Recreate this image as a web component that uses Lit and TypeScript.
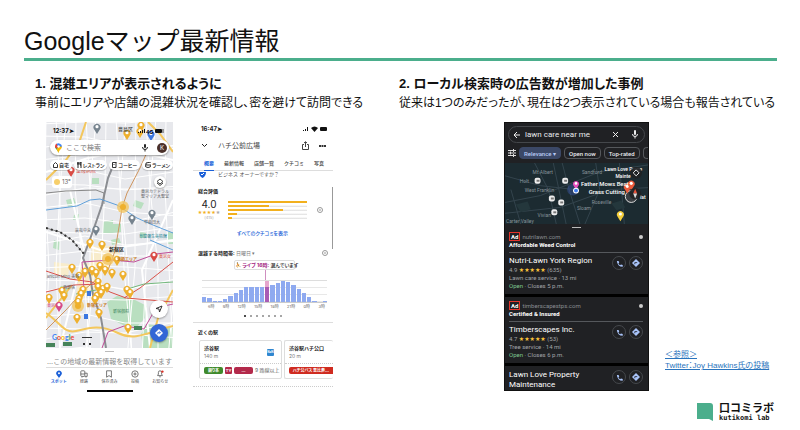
import { LitElement, html, svg, css } from "lit";
import { customElement } from "lit/decorators.js";

const base = css`
  * { box-sizing: border-box; margin: 0; padding: 0; }
  button, input, select {
    font: inherit; color: inherit; background: none; border: 0; outline: 0;
    min-width: 0; cursor: pointer; white-space: nowrap; line-height: inherit;
  }
  svg { display: block; flex: none; }
  :host { display: block; font-family: "Liberation Sans", "Noto Sans CJK JP", sans-serif; }
`;

type Pt = [number, number];

const pin = (x: number, y: number, fill: string, r = 3) => svg`
  <path d="M${x} ${y + r * 2} l${-r * 0.8} ${-r * 1.3} a${r} ${r} 0 1 1 ${r * 1.6} 0 z" fill=${fill}/>
  <circle cx=${x} cy=${y - r * 0.1} r=${r * 0.45} fill="#fff"/>`;

const gold = "#eeb02e";
const goldPins: Pt[] = [
  [90, 242], [102, 244], [127, 133], [141, 125], [140, 131], [72, 267], [79, 275], [85, 271], [92, 269],
  [100, 265], [105, 269], [112, 272], [123, 274], [98, 281], [98, 286], [103, 288], [107, 286], [62, 290],
  [64, 295], [49, 297], [83, 289], [81, 293], [79, 298], [78, 301], [97, 295], [95, 298], [127, 289],
  [130, 292], [99, 312], [77, 317], [128, 327], [96, 272], [101, 292], [117, 259],
];
const greyPins: Pt[] = [[97, 127], [132, 218], [152, 213], [96, 229]];
const parks = [
  "M107 302 l10 -6 14 2 16 8 -2 12 -8 9 -14 -2 -12 -6z",
  "M141 334 l6 -10 26 4 0 20 -30 0z",
  "M103 222 l10 -2 0 4 8 0 0 8 -18 2z",
  "M92 178 h7 v6 h-7z M66 200 l8 -2 2 6 -8 3z M54 240 l6 2 -1 8 -6 -2z M135 200 l9 3 -3 6 -8 -3z M168 232 h5 v12 h-5z M60 286 h8 v8 h-8z",
  "M111 240 l8 -2 2 5 -9 2z M140 232 l6 1 0 5 -6 0z M74 215 l5 -1 0 5 -6 1z",
];

const lines = (ds: string[], stroke: string, w: number, dash = "") =>
  ds.map((d) => svg`<path d=${d} fill="none" stroke=${stroke} stroke-width=${w} stroke-dasharray=${dash || "none"}/>`);

const streetsA = Array.from({ length: 24 }, (_, i) => `M40 ${100 + i * 12} l45 ${-8 + (i % 4) * 3} 40 ${9 - (i % 3) * 4} 55 ${-12 + (i % 5) * 4}`);
const streetsB = Array.from({ length: 17 }, (_, i) => `M${36 + i * 10} 118 l${-6 + (i % 3) * 5} 70 ${8 - (i % 4) * 4} 80 ${-8 + (i % 5) * 4} 90`);

const bellIcon = svg`<path d="M2 7 h6 l-1 -2 v-2 a2 2 0 0 0 -4 0 v2z M4 8.500 h2" fill="none" stroke="#555" stroke-width="1"/><circle cx="8" cy="2" r="1.500" fill="#d93025"/>`;

@customElement("tokyo-map-phone")
class TokyoMapPhone extends LitElement {
  static styles = [base, css`
    :host { width: 127px; overflow: hidden; background: #fff; font-family: Inter, "Noto Sans CJK JP", sans-serif; }
    .map { display: grid; }
    .map > * { grid-area: 1 / 1; min-width: 0; }
    .canvas { width: 100%; }
    .over { display: flex; flex-direction: column; }
    .status { display: flex; justify-content: space-between; padding: 0 7px; height: 18px; align-items: center; font-size: 6px; font-weight: 700; line-height: 8px; }
    .search { display: flex; align-items: center; gap: 4px; margin: 0 4px; padding: 0 2px 0 5px; height: 15px; border-radius: 8px; background: #fff; box-shadow: 0 1px 2px #0006; }
    .search input { flex: 1; font-size: 7px; line-height: 10px; }
    .search input::placeholder { color: #777; opacity: 1; }
    .avatar { width: 10px; height: 10px; border-radius: 50%; background: #4a3029; color: #fff; font-size: 6px; line-height: 10px; text-align: center; }
    .chips { display: flex; justify-content: space-between; margin: 5px 0 0 4px; padding-bottom: 2px; }
    .chip { display: flex; align-items: center; gap: 1px; flex: none; height: 10px; padding: 0 3px; border-radius: 5px; background: #fff; box-shadow: 0 1px 1px #0003; font-size: 5px; line-height: 8px; font-weight: 500; font-feature-settings: "palt"; }
    .row { display: flex; justify-content: space-between; padding: 4px 7px 0 6px; }
    .weather { display: flex; align-items: center; gap: 2px; width: 20px; height: 12px; padding-left: 2px; border-radius: 3px; background: #fff; font-size: 6px; line-height: 8px; color: #666; }
    .round { display: grid; place-items: center; border-radius: 50%; background: #fff; box-shadow: 0 1px 2px #0005; }
    .layers { width: 12px; height: 12px; }
    .fabs { display: flex; flex-direction: column; align-items: flex-end; gap: 6px; margin-top: auto; padding: 0 5px 6px; }
    .fab { width: 18px; height: 18px; }
    .go { background: #3367d6; }
    .sheet { display: flex; flex-direction: column; align-items: center; }
    .grip { width: 9px; height: 1px; margin: 3px 0 5px; background: #bbb; }
    .note { font-size: 7px; line-height: 10px; color: #888; white-space: nowrap; }
    nav { display: grid; grid-template-columns: repeat(5, 1fr); width: 100%; border-top: 1px solid #ddd; padding-top: 2px; }
    .tab { display: flex; flex-direction: column; align-items: center; font-size: 4px; line-height: 6px; color: #555; gap: 1px; }
    .tab.on { color: #1a5fd8; font-weight: 700; }
    .home { width: 46px; height: 2px; margin-top: 5px; background: #000; }
  `];

  render() {
    const tab = (label: string, icon: unknown, on = false) => html`
      <button class="tab ${on ? "on" : ""}"><svg width="8" height="8" viewBox="0 0 10 10">${icon}</svg>${label}</button>`;
    return html`
      <div class="map">
        <svg class="canvas" viewBox="46 122 127 226" role="img" aria-label="新宿区の地図">
          <rect x="46" y="122" width="127" height="226" fill="#e7e8ec"/>
          ${parks.map((d) => svg`<path d=${d} fill="#b9dfc0"/>`)}
          <path d="M92 246 l20 0 8 8 -10 14 -20 -2z M80 262 l14 2 0 30 -18 4z M54 262 l16 2 -2 12 -14 -2z" fill="#f8eccb"/>
          ${lines([...streetsA, ...streetsB], "#fff", 1)}
          ${lines(["M46 172 L88 158 128 150 173 160", "M46 232 L100 250 173 240", "M60 348 L84 250 70 190", "M150 348 L142 270 173 200"], "#fff", 2)}
          ${lines(["M86 122 L80 140 66 160 50 176 46 180", "M46 318 L60 300 72 285", "M46 313 C60 322 64 334 76 331 S100 324 118 333 150 331 173 326", "M173 152 L160 134 148 122", "M150 348 L158 318 173 290"], "#f4c75c", 2)}
          ${lines(["M151 143 L140 168 127 193 122 208 120 221 115 251 108 270", "M46 330 L66 310 84 290 96 280"], "#cf955e", 1)}
          ${lines(["M115 161 L108 178 102 205 93 231 83 258 90 275 93 295 101 318 106 348"], "#8b8d92", 2)}
          ${lines(["M46 193 L66 191 96 190 104 193 104 204", "M46 228 L60 232 72 240 84 254"], "#888", 1)}
          ${lines(["M46 228 L60 232 72 240 84 254"], "#333", 2, "2 3")}
          ${lines(["M46 210 L77 206 90 200 100 199 117 205 137 218 153 225 173 233", "M173 250 L150 240"], "#5f9fd9", 1)}
          ${lines(["M46 271 L70 279 92 282 110 292 126 298 173 302", "M46 292 L74 285 100 284", "M124 298 L140 288 173 262"], "#d9524a", 1)}
          ${lines(["M102 348 L108 332 124 326 144 329 156 308 173 304", "M82 262 L112 260 134 262 156 254 173 252", "M82 262 L84 288"], "#bf4d97", 1)}
          ${lines(["M124 290 L144 284 173 282", "M76 294 L96 290"], "#72b77c", 1)}
          <circle cx="123" cy="207" r="6" fill="#f3c662" opacity=".8"/><circle cx="123" cy="207" r="3" fill="#eeb02e"/>
          <circle cx="108" cy="259" r="6" fill="#f3c662" opacity=".8"/><circle cx="108" cy="259" r="3" fill="#eeb02e"/>
          <circle cx="78" cy="306" r="6" fill="#f3c662" opacity=".8"/><circle cx="78" cy="306" r="3" fill="#eeb02e"/>
          ${greyPins.map(([x, y]) => pin(x, y, "#76838e", 3.5))}
          ${goldPins.map(([x, y]) => pin(x, y, gold, 3.5))}
          ${pin(151, 134, "#3b76e0", 3.5)}${pin(71, 170, "#d94b44", 3.5)}${pin(154, 255, "#d94b44", 3.5)}${pin(59, 305, "#d64a86", 3.5)}
          <rect x="87" y="291" width="4" height="5" fill="#3b76e0"/><rect x="84" y="314" width="4" height="5" fill="#3b76e0"/>
          <g font-size="5" font-family="Inter, 'Noto Sans CJK JP', sans-serif" fill="#5f6368">
            <text x="118" y="131" fill="#333">豊島区</text>
            <text x="109" y="251" fill="#222" font-weight="700">新宿区</text>
            <text x="76" y="172" fill="#d94b44">聖母病院</text>
            <text x="141" y="193" font-size="4">東京カテドラル</text><text x="141" y="198" font-size="4">聖マリア大聖堂</text>
            <text x="75" y="232" font-size="4">裏板中央</text><text x="144" y="224" font-size="4">早稲田大</text>
            <text x="139" y="238" font-size="4" fill="#2b8796">草間彌生美術館</text>
            <text x="117" y="261" font-size="4" fill="#c67718" font-weight="700">京橋エリア</text>
            <text x="87" y="307" font-size="4" fill="#c67718" font-weight="700">新宿エリア</text>
            <text x="47" y="278" font-size="4">anicon Miho 美容</text><text x="63" y="289" font-size="4">西新宿</text>
            <text x="113" y="313" font-size="4" fill="#41855d">新宿御苑</text>
            <text x="159" y="258" font-size="4" fill="#d94b44">東京女</text><text x="47" y="307" font-size="4" fill="#d64a86">東京</text>
          </g>
          <g fill="#47845a"><rect x="46" y="343" width="9" height="4"/><rect x="63" y="342" width="9" height="4"/><rect x="134" y="326" width="8" height="4"/></g>
          <g fill="#333"><rect x="83" y="343" width="2" height="2"/><rect x="89" y="343" width="2" height="2"/><path d="M82 337 h10 v1 h-10z"/></g>
          <text x="52" y="340" font-size="7" font-family="Lato, sans-serif" font-weight="700"><tspan fill="#4285f4">G</tspan><tspan fill="#ea4335">o</tspan><tspan fill="#fbbc05">o</tspan><tspan fill="#4285f4">g</tspan><tspan fill="#34a853">l</tspan><tspan fill="#ea4335">e</tspan></text>
        </svg>
        <div class="over">
          <div class="status"><span>12:37➤</span>
            <svg width="28" height="6" viewBox="0 0 28 6"><path d="M0 5h1V4H0z M2 5h1V3H2z M4 5h1V2H4z M6 5h1V1H6z" fill="#111"/><text x="8" y="6" font-size="5" font-weight="700">4G</text><rect x="17" y="1" width="7" height="4" rx="1" fill="#111"/><rect x="24" y="1" width="2" height="4" fill="#999"/></svg>
          </div>
          <div class="search">
            <svg width="7" height="10" viewBox="0 0 14 20"><path d="M7 20 C6 14 0 12 0 7 L7 7z" fill="#34a853"/><path d="M7 20 C8 14 14 12 14 7 L10 4 L3 12z" fill="#fbbc05"/><path d="M0 7 A7 7 0 0 1 3 1 L8 6 4 11 C1 10 0 9 0 7z" fill="#ea4335"/><path d="M3 2 A7 7 0 0 1 14 7 L7 8z" fill="#4285f4"/><circle cx="7" cy="7" r="2.500" fill="#fff"/></svg>
            <input aria-label="検索" placeholder="ここで検索">
            <svg width="8" height="9" viewBox="0 0 8 9"><rect x="3" y="1" width="2" height="4" rx="1" fill="#222"/><path d="M1.500 4 a2.500 2.500 0 0 0 5 0 M4 6.500 v2" fill="none" stroke="#222"/></svg>
            <span></span>
            <span class="avatar">K</span>
          </div>
          <div class="chips">
            <button class="chip"><svg width="5" height="6" viewBox="0 0 5 6"><path d="M.5 2.500 L2.500 .5 4.500 2.500 V5.500 H.5z" fill="none" stroke="#333"/></svg>自宅</button>
            <button class="chip"><svg width="5" height="6" viewBox="0 0 5 6"><path d="M1 0 V6 M0 0 V2 H2 V0 M4 6 V0 Q3 1 3 3 H4" fill="none" stroke="#222"/></svg>レストラン</button>
            <button class="chip"><svg width="5" height="6" viewBox="0 0 5 6"><path d="M.5 .5 H4.500 M.5 .5 V5.500 H4 V.5 M2 2 V3" fill="none" stroke="#333"/></svg>コーヒー</button>
            <button class="chip"><svg width="6" height="6" viewBox="0 0 6 6"><path d="M0 3 H6 Q6 5.500 3 5.500 T0 3 M1 3 V1 L6 0" fill="none" stroke="#333"/></svg>ラーメン</button>
          </div>
          <div class="row">
            <div class="weather"><svg width="6" height="6" viewBox="0 0 6 6"><circle cx="3" cy="3" r="3" fill="#f7cf6b"/></svg>13°</div>
            <button class="round layers" aria-label="レイヤ"><svg width="8" height="8" viewBox="0 0 8 8"><path d="M4 1 L7 3.500 4 6 1 3.500z M1 5 L4 7.500 7 5" fill="none" stroke="#444"/></svg></button>
          </div>
          <div class="fabs">
            <button class="round fab" aria-label="現在地"><svg width="8" height="8" viewBox="0 0 8 8"><path d="M7 1 L4.500 7 4 4 1 3.500z" fill="none" stroke="#333"/></svg></button>
            <button class="round fab go" aria-label="経路"><svg width="8" height="8" viewBox="0 0 10 10"><path d="M5 0 L10 5 5 10 0 5z" fill="#fff"/><path d="M3.500 6.500 V4.500 H6.500 M5.500 3 L7 4.500 5.500 6" fill="none" stroke="#3367d6"/></svg></button>
          </div>
        </div>
      </div>
      <div class="sheet">
        <div class="grip"></div>
        <p class="note">…この地域の最新情報を取得しています</p>
        <nav>
          ${tab("スポット", svg`<path d="M5 10 L2 6 a3.500 3.500 0 1 1 6 0z" fill="#1a5fd8"/><circle cx="5" cy="4" r="1.200" fill="#fff"/>`, true)}
          ${tab("経路", svg`<rect x="1" y="1" width="5" height="7" rx="1" fill="none" stroke="#555"/><path d="M6 4 h3 v4 h-3 M1 5h5 M2 9h1 M7 9h1" fill="none" stroke="#555"/>`)}
          ${tab("保存済み", svg`<path d="M2 1 h6 v8 L5 7 2 9z" fill="none" stroke="#555"/>`)}
          ${tab("投稿", svg`<circle cx="5" cy="5" r="4" fill="none" stroke="#555"/><path d="M5 3v4M3 5h4" stroke="#555"/>`)}
          ${tab("お知らせ", bellIcon)}
        </nav>
        <div class="home"></div>
      </div>`;
  }
}

const hours = [5, 4, 1, 1, 3, 6, 9, 12, 15, 15, 15, 15, 21, 17, 19, 21, 20, 17, 13, 9, 5, 1, 0, 1];

@customElement("plaza-info-phone")
class PlazaInfoPhone extends LitElement {
  static styles = [base, css`
    :host { width: 140px; overflow: hidden; background: #fff; color: #222; font-size: 5px; line-height: 8px; font-family: Inter, "Noto Sans CJK JP", sans-serif; }
    .status { display: flex; justify-content: space-between; align-items: center; height: 13px; padding: 0 5px 0 8px; font-size: 6px; font-weight: 700; }
    .title { display: flex; align-items: center; height: 21px; padding: 0 7px 0 8px; gap: 10px; font-size: 7px; line-height: 10px; color: #444; }
    .title span { flex: 1; }
    .title button { display: grid; place-items: center; }
    .tabs { display: flex; justify-content: space-between; height: 15px; padding: 0 9px 0 11px; border-bottom: 1px solid #ddd; color: #444; }
    .tabs button { border-bottom: 1px solid transparent; height: 15px; font-weight: 500; }
    .tabs .on { color: #1a5fd8; border-color: #1a5fd8; font-weight: 700; }
    .owner { display: flex; align-items: center; gap: 12px; height: 7px; line-height: 7px; padding-left: 6px; color: #555; }
    h4 { font-size: 5px; line-height: 8px; padding-left: 5px; }
    .reviews { margin-top: 9px; border-right: 1px solid #999; padding-bottom: 12px; }
    .rating { display: flex; align-items: center; padding: 4px 9px 0 7px; gap: 10px; }
    .score { width: 18px; display: flex; flex-direction: column; align-items: center; white-space: nowrap; }
    .num { font-size: 10px; line-height: 11px; }
    .stars { font-size: 5px; line-height: 5px; color: #f2b01e; font-family: "DejaVu Sans", sans-serif; }
    .stars i, .small { color: #aaa; font-style: normal; }
    .small { font-size: 4px; line-height: 5px; }
    .bars { width: 79px; display: flex; flex-direction: column; gap: 2px; margin-right: auto; }
    .track { height: 2px; background: linear-gradient(#fff, #ddd); }
    .fill { height: 2px; background: #f2b01e; }
    .all { display: block; margin: 9px auto 0; color: #1a5fd8; font-weight: 500; font-feature-settings: "palt"; }
    .busy { display: flex; align-items: center; justify-content: space-between; padding: 0 5px; }
    .busy label { font-weight: 700; }
    .busy select { appearance: none; color: #777; }
    .tip { display: block; width: 61px; margin: 3px auto 0 41px; border: 1px solid #ddd; border-radius: 2px; text-align: center; font-weight: 500; white-space: nowrap; font-feature-settings: "palt"; }
    .tip b { color: #a3217f; }
    .stem { width: 1px; height: 10px; background: #cf8fc0; margin-left: 72px; }
    .chart { display: flex; align-items: flex-end; gap: 1px; height: 23px; margin: 0 6px 0 9px; border-top: 1px solid #ddd; border-bottom: 1px solid #ccc; background: repeating-linear-gradient(#fff 0 6px, #e8e8e8 6px 7px); }
    .hour { flex: 1; background: #8faaf0; }
    .hour.live { background: linear-gradient(#e6a6cd 0 30%, #a95bb4 30%); }
    .axis { display: flex; justify-content: space-between; padding: 0 8px 0 15px; font-size: 4px; line-height: 8px; color: #666; }
    .dots { display: flex; gap: 4px; justify-content: center; padding: 4px 0 5px; }
    .dot { width: 2px; height: 2px; border-radius: 50%; background: #888; }
    .dot:first-child { background: #111; }
    .near { border-top: 1px solid #ddd; padding: 5px 0 7px; overflow: hidden; border-bottom: 1px dotted #ccc; }
    .cards { display: flex; gap: 2px; margin: 4px 0 0 6px; }
    .card { flex: none; width: 83px; height: 39px; border: 1px solid #ddd; border-radius: 2px; }
    .next { flex: 1; border-right: 0; min-width: 0; }
    .place { display: flex; align-items: center; justify-content: space-between; height: 23px; padding: 0 7px 0 4px; border-bottom: 1px dotted #ccc; white-space: nowrap; }
    .next .place { padding-right: 0; }
    .place b { display: block; }
    .place span { color: #777; }
    .place .jr { width: 7px; height: 7px; background: #2f86d0; border-radius: 1px; color: #fff; font-size: 3px; line-height: 7px; text-align: center; font-weight: 700; }
    .routes { display: flex; align-items: center; gap: 2px; padding: 3px 0 3px 4px; color: #666; white-space: nowrap; line-height: 7px; font-feature-settings: "palt"; }
    .r { flex: 0 0 19px; height: 7px; border-radius: 2px; color: #fff; text-align: center; font-weight: 700; font-size: 4px; line-height: 7px; }
    .green { background: #3f8a2c; }
    .wine { background: #b32a4b; }
    .sq { flex-basis: 7px; border-radius: 1px; }
    .red { flex: 1; background: #cf2b20; border-radius: 2px 0 0 2px; }
  `];

  render() {
    const info = html`<svg width="6" height="6" viewBox="0 0 6 6"><circle cx="3" cy="3" r="2.500" fill="none" stroke="#999"/><path d="M3 2v2" stroke="#999"/></svg>`;
    return html`
      <div class="status"><span>16:47➤</span>
        <svg width="25" height="6" viewBox="0 0 25 6"><path d="M0 5h1V4H0z M2 5h1V3H2z M4 5h1V1H4z M8 2 Q11.500 -1 15 2 L11.500 6z" fill="#111"/><rect x="17" y="1" width="7" height="4" rx="1" fill="#111"/></svg>
      </div>
      <div class="title">
        <button aria-label="閉じる"><svg width="7" height="5" viewBox="0 0 7 5"><path d="M1 1 L3.500 3.500 6 1" fill="none" stroke="#222" stroke-width="1"/></svg></button>
        <span>ハチ公前広場</span>
        <button aria-label="共有"><svg width="7" height="9" viewBox="0 0 7 9"><path d="M2 3.500 H.5 V8.500 H6.500 V3.500 H5 M3.500 6 V1 M2 2 L3.500 .7 5 2" fill="none" stroke="#444"/></svg></button>
        <button aria-label="その他"><svg width="7" height="2" viewBox="0 0 7 2"><path d="M0 0h2v2H0z M2.500 0h2v2h-2z M5 0h2v2H5z" fill="#333"/></svg></button>
      </div>
      <div class="tabs"><button class="on">概要</button><button>最新情報</button><button>店舗一覧</button><button>クチコミ</button><button>写真</button></div>
      <div class="owner"><svg width="7" height="6" viewBox="0 0 7 6"><path d="M0 0 H7 Q7 4 3.500 6 Q0 4 0 0z" fill="#1a5fd8"/><path d="M2 2 L3 3 5 1" fill="none" stroke="#fff"/></svg>ビジネス オーナーですか？</div>
      <section class="reviews">
        <h4>総合評価</h4>
        <div class="rating">
          <div class="score"><span class="num">4.0</span><span class="stars">★★★★<i>★</i></span><span class="small">(415)</span></div>
          <div class="bars">${[100, 52, 70, 11, 5].map((w) => html`<div class="track"><div class="fill" style="width:${w}%"></div></div>`)}</div>
          ${info}
        </div>
        <button class="all">すべてのクチコミを表示</button>
      </section>
      <div class="busy"><span><label for="day">混雑する時間帯:</label> <select id="day"><option>日曜日 ▾</option></select></span>${info}</div>
      <div class="tip"><b>⛹ ライブ 16時:</b> 混んでいます</div>
      <div class="stem"></div>
      <div class="chart">${hours.map((h, i) => html`<div class="hour ${i === 12 ? "live" : ""}" style="height:${h}px"></div>`)}</div>
      <div class="axis">${["6時", "9時", "12時", "15時", "18時", "21時", "0時", "3時"].map((t) => html`<span>${t}</span>`)}</div>
      <div class="dots">${[0, 1, 2, 3, 4, 5, 6].map(() => html`<span class="dot"></span>`)}</div>
      <section class="near">
        <h4>近くの駅</h4>
        <div class="cards">
          <div class="card"><div class="place"><div><b>渋谷駅</b><span>140 m</span></div><span class="jr">NaN</span></div>
            <div class="routes"><span class="r green">銀り本</span><span class="r wine sq">TY</span><span class="r wine">…</span><span>9 路線以上</span></div></div>
          <div class="card next"><div class="place"><div><b>渋谷駅ハチ公口</b><span>20 m</span></div></div>
            <div class="routes"><span class="r red">ハチ公バス 恵比寿…</span></div></div>
        </div>
      </section>`;
  }
}

const darkBadges: Pt[] = [[537, 181], [565, 181], [551.5, 199], [561, 203], [554, 213]];

@customElement("lawn-search-phone")
class LawnSearchPhone extends LitElement {
  static styles = [base, css`
    :host { width: 145px; overflow: hidden; background: #202124; color: #e8eaed; font-family: Roboto, sans-serif; font-size: 6px; line-height: 8px; border: 1px solid #111; }
    .search { display: flex; align-items: center; gap: 4px; margin: 3px 3px 0; height: 17px; border: 1px solid #44474b; border-radius: 9px; padding: 0 5px 0 4px; }
    .search input { flex: 1; font-size: 8px; line-height: 11px; }
    .search .gap { width: 4px; }
    .chips { display: flex; align-items: center; gap: 3px; padding: 4px 0 4px 3px; }
    .chips button { flex: none; height: 12px; padding: 0 4px; border: 1px solid #55585c; border-radius: 4px; font-weight: 500; line-height: 9px; }
    .chips .on { background: #3b4867; border-color: #3b4867; color: #b9cbf5; }
    .chips .tune { border: 0; padding: 0; }
    .chips .more { flex: 1; padding: 0 0 0 2px; border-right: 0; border-radius: 4px 0 0 4px; text-align: left; }
    .map { width: 100%; }
    .grip { width: 9px; height: 1px; margin: 3px auto 4px; background: #bbb; }
    .item { padding: 0 5px 4px 4px; border-bottom: 3px solid #000; }
    .item + .item { padding-top: 4px; }
    .top, .body { display: flex; align-items: center; }
    .top { gap: 2px; color: #888c91; }
    .top i { margin-left: auto; width: 4px; height: 4px; border-radius: 50%; background: #ccc; }
    .ad { border: 1px solid #e3342b; color: #fff; font-weight: 700; height: 9px; padding: 0 1px; line-height: 7px; }
    .tag { font-weight: 700; padding-bottom: 3px; border-bottom: 1px solid #55585c; color: #fff; }
    .body { align-items: flex-start; padding-top: 3px; gap: 3px; color: #a0a4a8; }
    .info { flex: 1; min-width: 0; }
    .info p { height: 8px; white-space: nowrap; }
    h3 { font-size: 8px; line-height: 10px; font-weight: 400; color: #fff; }
    .stars { color: #f8c13a; font-family: "DejaVu Sans", sans-serif; font-size: 6px; line-height: 6px; }
    .open { color: #7cc58c; }
    .act { display: grid; place-items: center; width: 14px; height: 14px; border: 1px solid #45484c; border-radius: 50%; }
    .item + .last { border: 0; padding-top: 1px; padding-bottom: 0; }
  `];

  render() {
    const actions = html`
      <button class="act" aria-label="Call"><svg width="7" height="7" viewBox="0 0 8 8"><path d="M1 1 h2 l.7 2 -1 1 q.7 1.300 2 2 l1 -1 2 .7 v2 Q1.500 7.500 1 1z" fill="#a9c4fa"/></svg></button>
      <button class="act" aria-label="Directions"><svg width="8" height="8" viewBox="0 0 10 10"><path d="M5 0 L10 5 5 10 0 5z" fill="#a9c4fa"/><path d="M3.500 6.500 V4.500 H6.500" fill="none" stroke="#202124"/></svg></button>`;
    const item = (site: string, tag: string, name: string, rate: string, n: string, kind: string, close: string) => html`
      <article class="item">
        <div class="top"><span class="ad">Ad</span>${site}<i></i></div>
        <p class="tag">${tag}</p>
        <div class="body">
          <div class="info"><h3>${name}</h3><p>${rate} <span class="stars">★★★★★</span> (${n})</p><p>${kind}</p><p><span class="open">Open</span> · Closes ${close} p.m.</p></div>
          ${actions}
        </div>
      </article>`;
    return html`
      <div class="search">
        <svg width="8" height="8" viewBox="0 0 8 8"><path d="M7 4 H1 M4 1 L1 4 4 7" fill="none" stroke="#eee" stroke-width="1"/></svg>
        <input aria-label="Search" value="lawn care near me">
        <svg width="7" height="7" viewBox="0 0 7 7"><path d="M1 1 L6 6 M6 1 L1 6" stroke="#eee" stroke-width="1"/></svg>
        <span class="gap"></span>
        <svg width="8" height="9" viewBox="0 0 8 9"><rect x="3" y="0" width="2" height="5" rx="1" fill="#eee"/><path d="M1.500 4 a2.500 2.500 0 0 0 5 0 M4 6.500 v2" fill="none" stroke="#eee"/></svg>
      </div>
      <div class="chips">
        <button class="tune" aria-label="Filters"><svg width="8" height="8" viewBox="0 0 8 8"><path d="M0 1.500h8 M0 4h8 M0 6.500h8 M5.500 0v3 M2.500 2.500v3 M5.500 5v3" stroke="#ddd" stroke-width="1"/></svg></button>
        <button class="on">Relevance ▾</button><button>Open now</button><button>Top-rated</button><button class="more" aria-label="More filters"></button>
      </div>
      <svg class="map" viewBox="504 163 145 62" role="img" aria-label="Map of lawn care services">
        <rect x="504" y="163" width="145" height="62" fill="#1c2b31"/>
        ${lines(["M504 203 L540 196 600 172 649 165", "M504 214 L560 208 610 190 649 188", "M534 163 L548 190 556 225", "M553 163 L566 225", "M562 163 L569 190 580 225", "M504 176 L540 186 575 190", "M585 225 L600 190 596 163", "M620 163 L625 225", "M520 225 L510 190"], "#34444d", 1)}
        <path d="M515 205 l12 -3 3 8 -10 3z M612 204 l10 -3 4 7 -9 3z" fill="#24373c"/>
        ${darkBadges.map(([x, y]) => svg`<rect x=${x - 3} y=${y - 3} width="6" height="6" rx="2" fill="#eee"/><rect x=${x - 1} y=${y - 1} width="3" height="2" fill="#777"/>`)}
        <circle cx="573" cy="190" r="6" fill="#35529a" opacity=".5"/>
        ${pin(576, 184, "#e44cba")}<circle cx="576" cy="191" r="3" fill="#fff"/><circle cx="576" cy="191" r="2" fill="#3f7df0"/>
        <circle cx="632" cy="197" r="6" fill="#3a3f43" stroke="#ddd"/>
        ${pin(628, 187, "#ea5b3c", 3.5)}${pin(632, 184, "#ea5b3c", 3.5)}${pin(621, 215, "#f6cf3c", 3.5)}
        <g font-family="Roboto, sans-serif" font-size="5" fill="#87939a">
          <text x="532" y="174">Mt Albert</text><text x="582" y="174">Sandford</text><text x="519" y="183">Holt</text>
          <text x="524" y="192">West Franklin</text><text x="592" y="205">Roseville</text><text x="577" y="211">Sloam</text>
          <text x="537" y="218">Vivian</text><text x="505" y="224">Carter Valley</text>
        </g>
        <g font-family="Roboto, sans-serif" font-size="6" font-weight="500" fill="#fff">
          <text x="605" y="171" font-size="5">Lawn Love Prope</text><text x="616" y="178" font-size="5">Mainte</text>
          <text x="581" y="186">Father Mows Best</text><text x="589" y="194">Grass Cutting</text><text x="641" y="200" font-size="5">lat</text>
        </g>
        <circle cx="637" cy="173" r="6" fill="#202124" opacity=".9"/><path d="M637 170 l3 3 -3 3 -3 -3z" fill="none" stroke="#eee"/>
        <circle cx="636" cy="194" r="6" fill="#202124" opacity=".9"/><path d="M636 189 l2 5 h-4z" fill="#e8523a"/><path d="M636 199 l2 -5 h-4z" fill="#ddd"/>
      </svg>
      <div class="grip"></div>
      ${item("nutrilawn.com", "Affordable Weed Control", "Nutri-Lawn York Region", "4.9", "635", "Lawn care service · 13 mi", "5")}
      ${item("timberscapestps.com", "Certified & Insured", "Timberscapes Inc.", "4.7", "53", "Tree service · 14 mi", "6")}
      <article class="item last"><div class="body"><div class="info"><h3>Lawn Love Property Maintenance</h3></div>${actions}</div></article>`;
  }
}

@customElement("app-root")
class AppRoot extends LitElement {
  static styles = [base, css`
    :host { background: #fff; color: #111; min-height: 100vh; }
    .slide { display: flex; flex-direction: column; padding: 24px 23px 7px 24px; }
    h1 { font-size: 25px; line-height: 34px; font-weight: 400; border-bottom: 3px solid #4bae8c; }
    .cols { display: grid; grid-template-columns: 364fr 378fr; padding: 14px 0 0 11px; }
    h2 { font-size: 13px; line-height: 18px; font-weight: 700; white-space: nowrap; font-feature-settings: "palt"; }
    .lead { font-size: 12px; line-height: 20px; white-space: nowrap; font-feature-settings: "palt"; }
    .shots { display: flex; align-items: flex-start; gap: 20px; margin: 9px 0 0 11px; }
    .right { margin-left: 105px; gap: 16px; }
    .shots > * { flex: none; }
    .ref { align-self: flex-end; margin-bottom: 20px; font-size: 8px; line-height: 11px; display: flex; flex-direction: column; font-feature-settings: "palt"; }
    .ref a { color: #2a74bd; align-self: flex-start; white-space: nowrap; }
    footer { display: flex; justify-content: flex-end; align-items: center; gap: 5px; padding: 9px 3px 0 0; }
    .brand { font-size: 11px; line-height: 13px; font-weight: 700; font-family: "Noto Sans CJK JP", sans-serif; }
    .sub { font-size: 7px; line-height: 8px; font-weight: 700; font-family: "DejaVu Sans Mono", monospace; }
  `];

  render() {
    return html`
      <main class="slide">
        <h1>Googleマップ最新情報</h1>
        <div class="cols">
          <section>
            <h2>1. 混雑エリアが表示されるように</h2>
            <p class="lead">事前にエリアや店舗の混雑状況を確認し、密を避けて訪問できる</p>
            <div class="shots"><tokyo-map-phone></tokyo-map-phone><plaza-info-phone></plaza-info-phone></div>
          </section>
          <section>
            <h2>2. ローカル検索時の広告数が増加した事例</h2>
            <p class="lead">従来は1つのみだったが、現在は2つ表示されている場合も報告されている</p>
            <div class="shots right"><lawn-search-phone></lawn-search-phone>
              <div class="ref"><a href="#ref">＜参照＞</a><a href="#joy">Twitter：Joy Hawkins氏の投稿</a></div>
            </div>
          </section>
        </div>
        <footer>
          <svg width="17" height="18" viewBox="0 0 17 18"><path d="M0 0 H13 Q16 0 16 3 V18 L12 16 H0z" fill="#4bae8c"/></svg>
          <div><p class="brand">口コミラボ</p><p class="sub">kutikomi lab</p></div>
        </footer>
      </main>`;
  }
}
